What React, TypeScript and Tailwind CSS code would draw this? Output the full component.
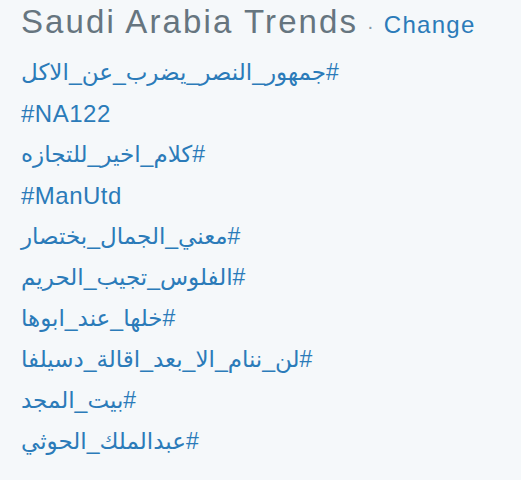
const trends = [
  "#جمهور_النصر_يضرب_عن_الاكل",
  "#NA122",
  "#كلام_اخير_للتجازه",
  "#ManUtd",
  "#معني_الجمال_بختصار",
  "#الفلوس_تجيب_الحريم",
  "#خلها_عند_ابوها",
  "#لن_ننام_الا_بعد_اقالة_دسيلفا",
  "#بيت_المجد",
  "#عبدالملك_الحوثي",
];

const isLatin = (t: string) => /^#[A-Za-z0-9]+$/.test(t);

export default function App() {
  return (
    <div className="min-h-screen w-full bg-[#f5f8fa] font-['Liberation_Sans','DejaVu_Sans',sans-serif]">
      <div className="px-[21px] pt-[4px]">
        <div className="flex items-baseline h-[36px] leading-[36px]">
          <h2 className="text-[33px] tracking-[2.1px] text-[#66757f]">Saudi Arabia Trends</h2>
          <span className="ml-[9px] mr-[10px] text-[20px] text-[#8899a6]">·</span>
          <a className="text-[24px] tracking-[1.3px] text-[#2b7bb9]">Change</a>
        </div>
        <ul className="mt-[12px]">
          {trends.map((t) => (
            <li
              key={t}
              className={
                isLatin(t)
                  ? "h-[41px] leading-[41px] text-[24px] tracking-[0.5px] text-[#2b7bb9]"
                  : "h-[41px] leading-[41px] text-[23px] text-[#2b7bb9]"
              }
            >
              <bdi>{t}</bdi>
            </li>
          ))}
        </ul>
      </div>
    </div>
  );
}
